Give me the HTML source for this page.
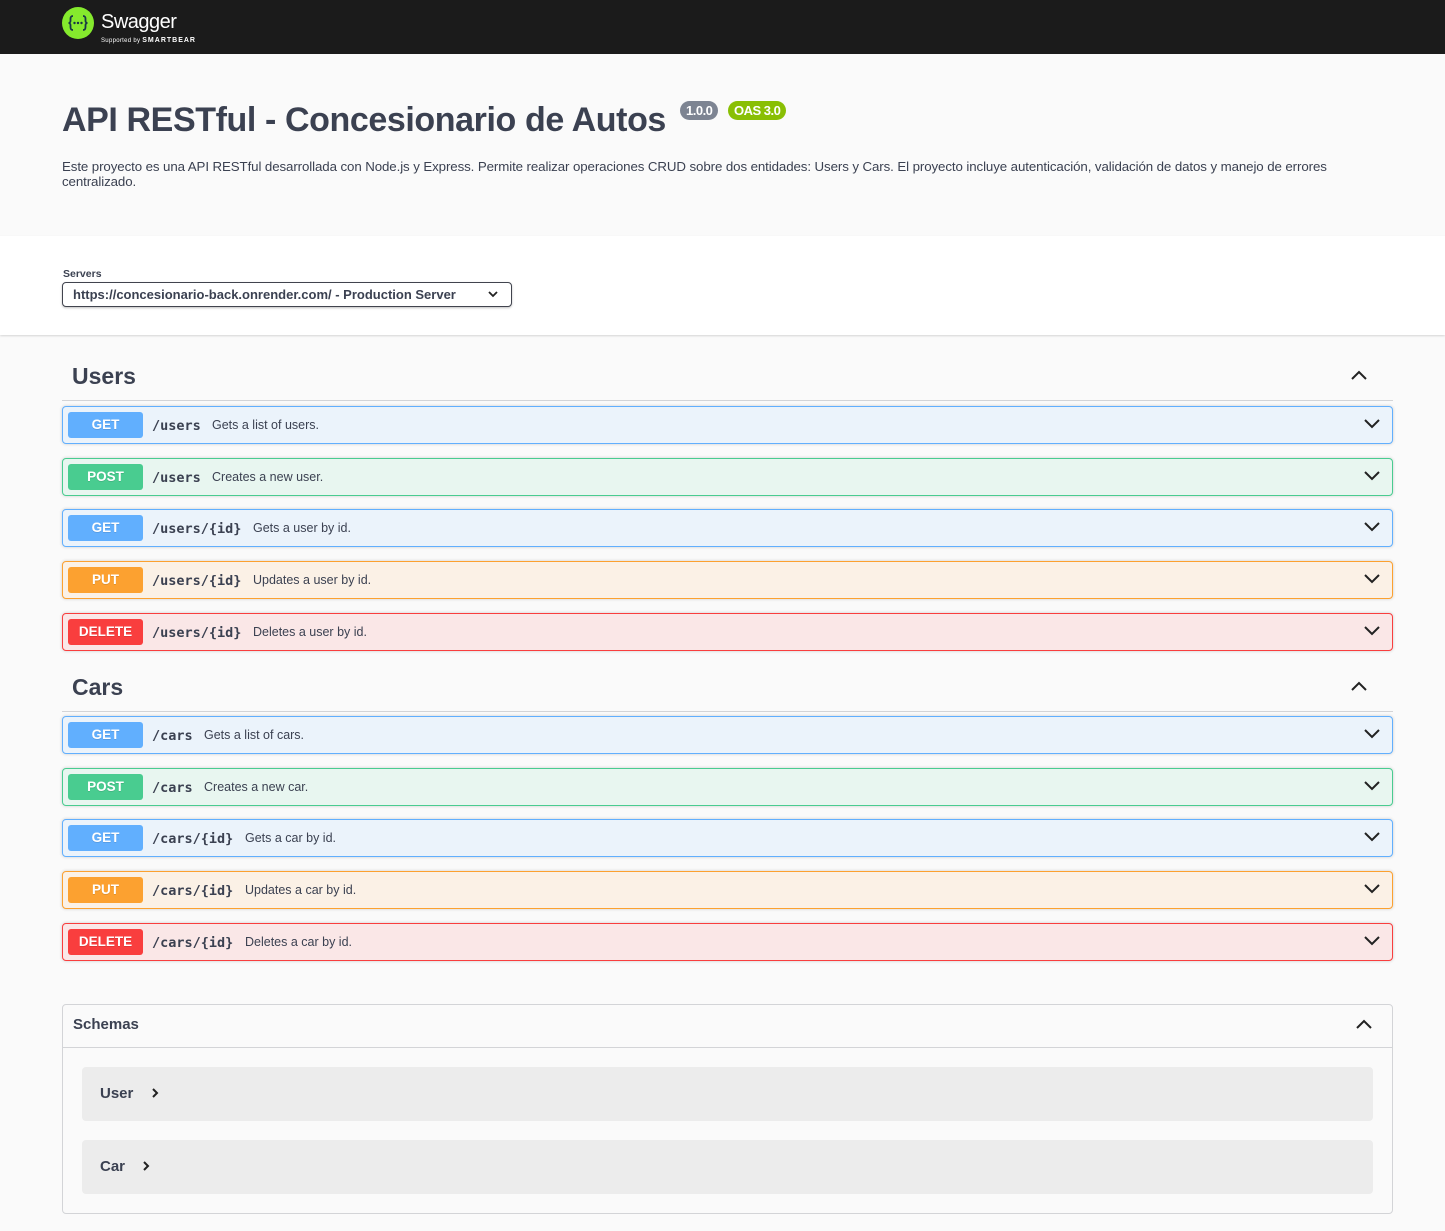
<!DOCTYPE html>
<html><head><meta charset="utf-8"><style>
*{box-sizing:border-box;margin:0;padding:0}
body{width:1445px;height:1231px;background:#fafafa;font-family:"Liberation Sans",Arial,sans-serif;color:#3b4151;position:relative;overflow:hidden}
.top{position:absolute;left:0;top:0;width:1445px;height:54px;background:#1b1b1b}
.info{position:absolute;left:0;top:54px;width:1445px;height:182px;background:#fafafa}
.srv{position:absolute;left:0;top:236px;width:1445px;height:99px;background:#fff;box-shadow:0 1px 2px rgba(0,0,0,.15)}
h1{position:absolute;left:62px;top:101px;font-size:34px;font-weight:bold;color:#3b4151;letter-spacing:-0.4px;white-space:nowrap}
.badge{position:absolute;top:101px;height:19px;border-radius:10px;color:#fff;font-size:13px;font-weight:bold;line-height:19px;padding:0 6px;letter-spacing:-0.5px}
.desc{position:absolute;left:62px;top:159px;font-size:13.3px;line-height:15px;width:1290px;letter-spacing:-0.1px}
.sel{position:absolute;left:62px;top:282px;width:450px;height:25px;border:1px solid #41444e;border-radius:4px;font-size:13px;font-weight:bold;line-height:23px;padding-left:10px;box-shadow:0 1px 2px rgba(0,0,0,.25);background:#fff}
.tag{position:absolute;left:62px;width:1331px;height:40px;border-bottom:1px solid #d3d4d7}
.tag span{position:absolute;left:10px;top:2px;font-size:23px;font-weight:bold;color:#3b4151}
.op{position:absolute;left:62px;width:1331px;height:38px;border:1px solid;border-radius:4px;box-shadow:0 0 3px rgba(0,0,0,.19)}
.op .m{position:absolute;left:5px;top:5px;width:75px;height:26px;border-radius:3px;color:#fff;font-weight:bold;font-size:13.5px;text-align:center;line-height:26px;text-shadow:0 1px 0 rgba(0,0,0,.1)}
.op .p{position:absolute;left:89px;top:11px;font-family:"DejaVu Sans Mono","Liberation Mono",monospace;font-weight:bold;font-size:13.5px;color:#3b4151}
.op .d{position:absolute;top:11px;font-size:12.5px;color:#3b4151}
.op svg{position:absolute;right:12px;top:12px}
.get{background:#ebf3fb;border-color:#61affe}.get .m{background:#61affe}
.post{background:#e8f6f0;border-color:#49cc90}.post .m{background:#49cc90}
.put{background:#fbf1e6;border-color:#fca130}.put .m{background:#fca130}
.del{background:#fae7e7;border-color:#f93e3e}.del .m{background:#f93e3e}
.sch{position:absolute;left:62px;top:1004px;width:1331px;height:210px;border:1px solid #d3d4d7;border-radius:4px;background:#fafafa}
.sch .h{height:43px;border-bottom:1px solid #d3d4d7;font-size:15px;font-weight:bold;padding:11px 10px;color:#3b4151}
.mod{position:absolute;left:19px;width:1291px;height:54px;background:#ececec;border-radius:4px;font-size:15px;font-weight:bold;padding:18px 18px;color:#3b4151}
</style></head><body>
<div class="top">
<svg style="position:absolute;left:62px;top:7px" width="32" height="32" viewBox="0 0 32 32"><circle cx="16" cy="16" r="16" fill="#85ea2d"/><path d="M11 9c-2 0-2.5 1-2.5 3v2c0 1-1 2-2 2 1 0 2 1 2 2v2c0 2 .5 3 2.5 3M21 9c2 0 2.5 1 2.5 3v2c0 1 1 2 2 2-1 0-2 1-2 2v2c0 2-.5 3-2.5 3" stroke="#173647" stroke-width="1.8" fill="none"/><circle cx="12.5" cy="16" r="1.2" fill="#173647"/><circle cx="16" cy="16" r="1.2" fill="#173647"/><circle cx="19.5" cy="16" r="1.2" fill="#173647"/></svg>
<div style="position:absolute;left:101px;top:11px;color:#fff;font-size:20px;letter-spacing:-0.5px">Swagger</div>
<div style="position:absolute;left:101px;top:37px;color:#fff;font-size:6px;letter-spacing:0.3px">Supported by <b style="font-size:7px;letter-spacing:1px">SMARTBEAR</b></div>
</div>
<div class="info"></div>
<h1>API RESTful - Concesionario de Autos</h1>
<div class="badge" style="left:680px;background:#7d8492">1.0.0</div>
<div class="badge" style="left:728px;background:#89bf04">OAS 3.0</div>
<div class="desc">Este proyecto es una API RESTful desarrollada con Node.js y Express. Permite realizar operaciones CRUD sobre dos entidades: Users y Cars. El proyecto incluye autenticación, validación de datos y manejo de errores<br>centralizado.</div>
<div class="srv"></div>
<div style="position:absolute;left:63px;top:268px;font-size:10.5px;font-weight:bold">Servers</div>
<div class="sel">https://concesionario-back.onrender.com/ - Production Server
<svg style="position:absolute;left:425px;top:8px" width="10" height="7" viewBox="0 0 10 7"><path d="M1 1l4 4 4-4" stroke="#222" stroke-width="1.8" fill="none"/></svg></div>

<div class="tag" style="top:361px"><span>Users</span><svg style="position:absolute;right:26px;top:9px" width="16" height="10" viewBox="0 0 16 10"><path d="M1 9l7-7 7 7" stroke="#222" stroke-width="2" fill="none"/></svg></div>
<div class="tag" style="top:672px"><span>Cars</span><svg style="position:absolute;right:26px;top:9px" width="16" height="10" viewBox="0 0 16 10"><path d="M1 9l7-7 7 7" stroke="#222" stroke-width="2" fill="none"/></svg></div>

<div class="op get" style="top:406px"><div class="m">GET</div><div class="p">/users</div><div class="d" style="left:149px">Gets a list of users.</div><svg width="16" height="10" viewBox="0 0 16 10"><path d="M1 1l7 7 7-7" stroke="#222" stroke-width="2" fill="none"/></svg></div>
<div class="op post" style="top:458px"><div class="m">POST</div><div class="p">/users</div><div class="d" style="left:149px">Creates a new user.</div><svg width="16" height="10" viewBox="0 0 16 10"><path d="M1 1l7 7 7-7" stroke="#222" stroke-width="2" fill="none"/></svg></div>
<div class="op get" style="top:509px"><div class="m">GET</div><div class="p">/users/{id}</div><div class="d" style="left:190px">Gets a user by id.</div><svg width="16" height="10" viewBox="0 0 16 10"><path d="M1 1l7 7 7-7" stroke="#222" stroke-width="2" fill="none"/></svg></div>
<div class="op put" style="top:561px"><div class="m">PUT</div><div class="p">/users/{id}</div><div class="d" style="left:190px">Updates a user by id.</div><svg width="16" height="10" viewBox="0 0 16 10"><path d="M1 1l7 7 7-7" stroke="#222" stroke-width="2" fill="none"/></svg></div>
<div class="op del" style="top:613px"><div class="m">DELETE</div><div class="p">/users/{id}</div><div class="d" style="left:190px">Deletes a user by id.</div><svg width="16" height="10" viewBox="0 0 16 10"><path d="M1 1l7 7 7-7" stroke="#222" stroke-width="2" fill="none"/></svg></div>

<div class="op get" style="top:716px"><div class="m">GET</div><div class="p">/cars</div><div class="d" style="left:141px">Gets a list of cars.</div><svg width="16" height="10" viewBox="0 0 16 10"><path d="M1 1l7 7 7-7" stroke="#222" stroke-width="2" fill="none"/></svg></div>
<div class="op post" style="top:768px"><div class="m">POST</div><div class="p">/cars</div><div class="d" style="left:141px">Creates a new car.</div><svg width="16" height="10" viewBox="0 0 16 10"><path d="M1 1l7 7 7-7" stroke="#222" stroke-width="2" fill="none"/></svg></div>
<div class="op get" style="top:819px"><div class="m">GET</div><div class="p">/cars/{id}</div><div class="d" style="left:182px">Gets a car by id.</div><svg width="16" height="10" viewBox="0 0 16 10"><path d="M1 1l7 7 7-7" stroke="#222" stroke-width="2" fill="none"/></svg></div>
<div class="op put" style="top:871px"><div class="m">PUT</div><div class="p">/cars/{id}</div><div class="d" style="left:182px">Updates a car by id.</div><svg width="16" height="10" viewBox="0 0 16 10"><path d="M1 1l7 7 7-7" stroke="#222" stroke-width="2" fill="none"/></svg></div>
<div class="op del" style="top:923px"><div class="m">DELETE</div><div class="p">/cars/{id}</div><div class="d" style="left:182px">Deletes a car by id.</div><svg width="16" height="10" viewBox="0 0 16 10"><path d="M1 1l7 7 7-7" stroke="#222" stroke-width="2" fill="none"/></svg></div>

<div class="sch"><div class="h">Schemas</div>
<svg style="position:absolute;right:20px;top:14px" width="16" height="10" viewBox="0 0 16 10"><path d="M1 9l7-7 7 7" stroke="#222" stroke-width="2" fill="none"/></svg>
<div class="mod" style="top:62px">User <svg style="margin-left:14px" width="7" height="10" viewBox="0 0 7 10"><path d="M1 1l4 4-4 4" stroke="#222" stroke-width="2" fill="none"/></svg></div>
<div class="mod" style="top:135px">Car <svg style="margin-left:14px" width="7" height="10" viewBox="0 0 7 10"><path d="M1 1l4 4-4 4" stroke="#222" stroke-width="2" fill="none"/></svg></div>
</div>
</body></html>
